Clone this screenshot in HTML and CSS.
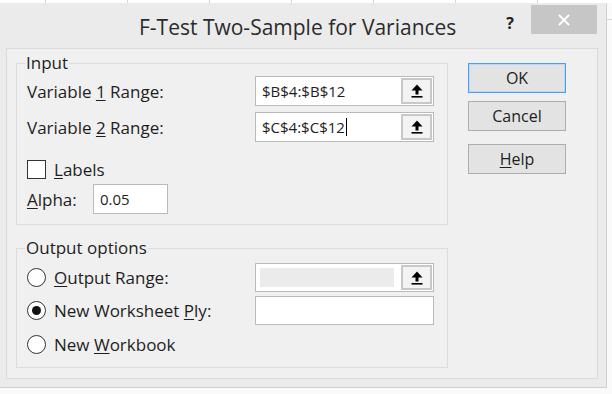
FILE: index.html
```html
<!DOCTYPE html>
<html lang="en">
<head>
    <meta charset="UTF-8">
    <title>F-Test Two-Sample for Variances</title>
    <link rel="stylesheet" href="styles.css">
</head>
<body>

<div class="sheet-strip"></div>

<div class="dialog">
    <div class="titlebar">
        <span class="title">F-Test Two-Sample for Variances</span>
        <span class="help-q">?</span>
        <button class="close" aria-label="Close">
            <svg width="12" height="12" viewBox="0 0 12 12"><path d="M1 1 L11 11 M11 1 L1 11" stroke="#fff" stroke-width="1.8" fill="none"/></svg>
        </button>
    </div>

    <div class="panel">
        <div class="groups">
            <fieldset class="group input-group">
                <legend>Input</legend>
                <div class="row first">
                    <label class="row-label">Variable <u>1</u> Range:</label>
                    <div class="ref">
                        <span class="ref-text">$B$4:$B$12</span>
                        <span class="ref-btn">
                            <svg width="12" height="14" viewBox="0 0 12 14"><polygon points="6,0.5 11.5,6.5 0.5,6.5" fill="#000"/><rect x="4.5" y="6" width="3" height="4.5" fill="#000"/><rect x="0.5" y="12" width="11" height="1.6" fill="#000"/></svg>
                        </span>
                    </div>
                </div>
                <div class="row second">
                    <label class="row-label">Variable <u>2</u> Range:</label>
                    <div class="ref">
                        <span class="ref-text">$C$4:$C$12<span class="caret"></span></span>
                        <span class="ref-btn">
                            <svg width="12" height="14" viewBox="0 0 12 14"><polygon points="6,0.5 11.5,6.5 0.5,6.5" fill="#000"/><rect x="4.5" y="6" width="3" height="4.5" fill="#000"/><rect x="0.5" y="12" width="11" height="1.6" fill="#000"/></svg>
                        </span>
                    </div>
                </div>
                <div class="check-row">
                    <span class="checkbox"></span>
                    <span><u>L</u>abels</span>
                </div>
                <div class="alpha-row">
                    <label class="alpha-label"><u>A</u>lpha:</label>
                    <span class="alpha-input">0.05</span>
                </div>
            </fieldset>

            <fieldset class="group output-group">
                <legend>Output options</legend>
                <div class="opt-row first">
                    <div class="radio-label"><span class="radio"></span><span><u>O</u>utput Range:</span></div>
                    <div class="ref">
                        <span class="ref-text"><span class="disabled-field"></span></span>
                        <span class="ref-btn">
                            <svg width="12" height="14" viewBox="0 0 12 14"><polygon points="6,0.5 11.5,6.5 0.5,6.5" fill="#000"/><rect x="4.5" y="6" width="3" height="4.5" fill="#000"/><rect x="0.5" y="12" width="11" height="1.6" fill="#000"/></svg>
                        </span>
                    </div>
                </div>
                <div class="opt-row second">
                    <div class="radio-label"><span class="radio checked"></span><span>New Worksheet <u>P</u>ly:</span></div>
                    <div class="ref"></div>
                </div>
                <div class="opt-row third">
                    <div class="radio-label"><span class="radio"></span><span>New <u>W</u>orkbook</span></div>
                </div>
            </fieldset>
        </div>

        <div class="buttons">
            <button class="btn default">OK</button>
            <button class="btn">Cancel</button>
            <button class="btn help"><u>H</u>elp</button>
        </div>
    </div>
</div>

</body>
</html>
```

FILE: styles.css
```css
body {
    margin: 0;
    font-family: "Open Sans", "Noto Sans", sans-serif;
    font-size: 17px;
    color: #1e1e1e;
    background: #fafafa linear-gradient(#fafafa 19px, #d6d6d6 19px, #d6d6d6 20px, #fafafa 20px) no-repeat;
}
u { text-decoration-thickness: 1px; text-underline-offset: 2px; }

.sheet-strip {
    height: 3px;
    background: #fff repeating-linear-gradient(90deg, transparent 0, transparent 44px, #d4d4d4 44px, #d4d4d4 45px, transparent 45px, transparent 82px);
    background-position: 1px 0;
}

.dialog {
    width: 606px;
    height: 384px;
    background: #ebebeb;
    border-right: 1px solid #d0d0d0;
    border-bottom: 1px solid #d0d0d0;
}

/* barre de titre */
.titlebar { display: flex; align-items: flex-start; height: 45px; }
.title { flex: 1; padding: 12px 0 0 139px; font-size: 21px; line-height: 24px; color: #2b2b2b; }
.help-q { margin-top: 9px; font-size: 16px; font-weight: bold; color: #222; }
.close {
    margin: 2px 9px 0 17px;
    width: 66px;
    height: 29px;
    border: none;
    padding: 0;
    background: #c6c6c6;
    display: flex;
    align-items: center;
    justify-content: center;
}

.panel {
    margin: 0 8px 0 6px;
    height: 331px;
    border: 1px solid #dadada;
    background: #f0f0f0;
    display: flex;
    padding: 4px 0 0 9px;
    box-sizing: border-box;
}

.groups { width: 432px; }
.group {
    margin: 0;
    padding: 0 10px 10px;
    border: 1px solid #dcdcdc;
    min-width: 0;
}
.group legend { padding: 0 1px; margin-left: -2px; line-height: 20px; }
.output-group { margin-top: 13px; padding-bottom: 9px; }

.row { display: flex; align-items: center; height: 30px; }
.row.first { margin-top: 3px; }
.row.second { margin-top: 6px; }
.row-label { width: 228px; }

.ref {
    width: 179px;
    height: 100%;
    box-sizing: border-box;
    border: 1px solid #bababa;
    background: #fff;
    display: flex;
    font-size: 15px;
}
.ref-text { flex: 1; padding-left: 6px; display: flex; align-items: center; }
.ref-btn {
    width: 31px;
    margin: 1px;
    box-sizing: border-box;
    border: 2px solid #c8c8c8;
    background: #f3f3f3;
    display: flex;
    align-items: center;
    justify-content: center;
}
.caret { display: inline-block; width: 1px; height: 18px; background: #000; margin-left: 1px; }
.disabled-field { display: block; width: 134px; height: 19px; margin-left: -2px; background: #ebebeb; }

.check-row { display: flex; align-items: center; margin-top: 18px; height: 19px; }
.checkbox {
    width: 19px; height: 19px; box-sizing: border-box;
    border: 1px solid #333; background: #fff; margin-right: 8px;
}
.alpha-row { display: flex; align-items: center; margin-top: 5px; height: 30px; }
.alpha-label { width: 66px; }
.alpha-input {
    width: 75px; height: 30px; box-sizing: border-box;
    border: 1px solid #bababa; background: #fff;
    font-size: 15px;
    padding-left: 6px; display: flex; align-items: center;
}

.opt-row { display: flex; align-items: center; height: 29px; }
.opt-row.first { margin-top: 5px; }
.opt-row.second { margin-top: 4px; }
.opt-row.third { margin-top: 5px; height: 28px; }
.radio-label { width: 228px; display: flex; align-items: center; }
.radio {
    width: 19px; height: 19px; box-sizing: border-box;
    border: 1px solid #333; border-radius: 50%; background: #fff;
    margin-right: 8px; position: relative;
}
.radio.checked::after {
    content: "";
    position: absolute;
    left: 4px; top: 4px;
    width: 9px; height: 9px;
    border-radius: 50%;
    background: #111;
}

.buttons { margin: 10px 0 0 20px; display: flex; flex-direction: column; width: 98px; }
.btn {
    height: 30px;
    font-family: inherit;
    font-size: 16px;
    color: #1e1e1e;
    background: #e3e3e3;
    border: 1px solid #adadad;
    padding: 0;
    margin-bottom: 8px;
}
.btn.default { border-color: #4d9ff0; box-shadow: inset 0 0 0 1px #b9d8f6; }
.btn.help { margin-top: 5px; }
```
